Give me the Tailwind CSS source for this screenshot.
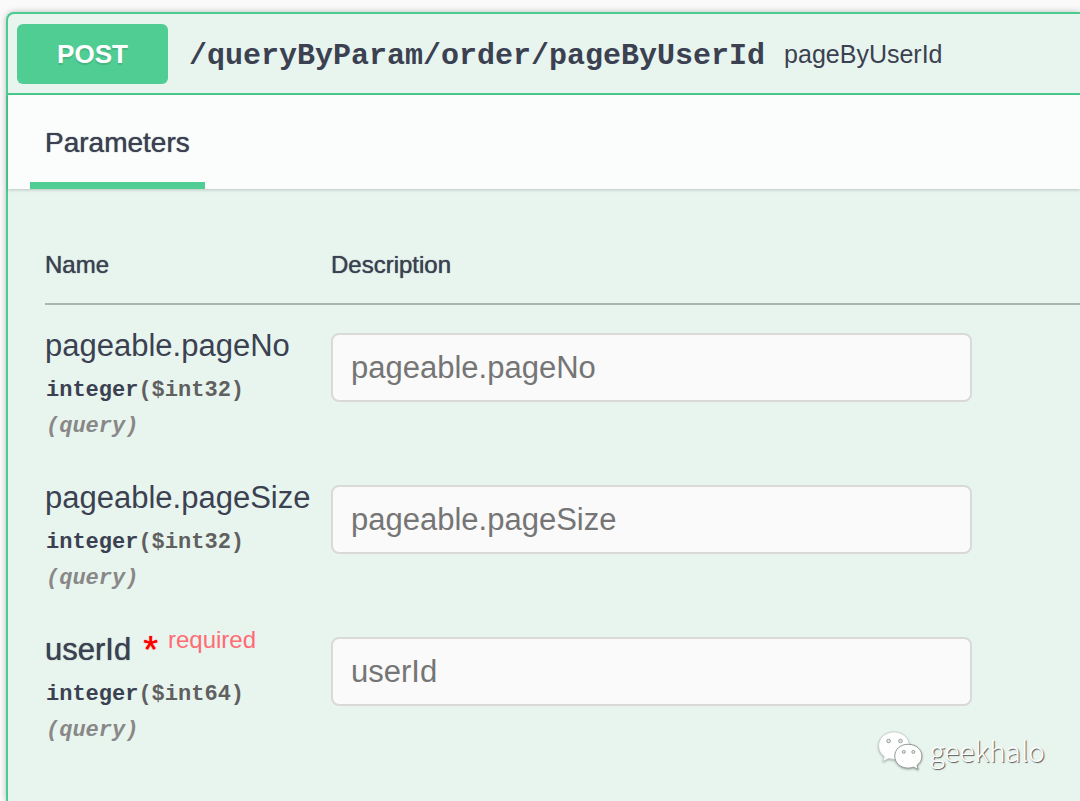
<!DOCTYPE html>
<html lang="en">
<head>
<meta charset="utf-8">
<meta name="viewport" content="width=device-width, initial-scale=1">
<title>POST /queryByParam/order/pageByUserId</title>
<script src="https://cdn.jsdelivr.net/npm/@tailwindcss/browser@4"></script>
</head>
<body class="relative flex min-h-screen flex-col bg-[#fafafa] pt-3 pl-[6px] font-['Liberation_Sans',Arial,sans-serif] text-[#3b4151]">
<main class="flex-1 rounded-tl-lg border-t-2 border-l-2 border-[#49cc90] bg-[#e8f5ee] shadow-[0_0_6px_rgba(0,0,0,0.25)]">
  <header class="flex items-center border-b-2 border-[#49cc90] pt-[10px] pb-[9px] pl-[9px]">
    <button type="button" class="h-[60px] w-[151px] rounded-md bg-[#50cd93] text-[26px] font-bold text-white [text-shadow:0_2px_1px_rgba(0,0,0,0.12)]">POST</button>
    <a href="#parameters" class="ml-[21px] pt-1 font-['Liberation_Mono','Courier_New',monospace] text-[30px] font-bold">/queryByParam/order/pageByUserId</a>
    <span class="ml-[19px] pt-[2px] text-[25px]">pageByUserId</span>
  </header>
  <section id="parameters">
    <div class="flex bg-[#fbfdfc] pl-[22px] shadow-[0_1px_3px_rgba(0,0,0,0.2)]">
      <h2 class="flex h-[94px] items-center border-b-[7px] border-[#50cd93] px-[15px] pt-2 text-[28px] [text-shadow:0_0_1px_#3b4151]">Parameters</h2>
    </div>
    <div class="pl-[37px]">
      <table class="w-full border-collapse text-left">
        <thead>
          <tr class="border-b-2 border-[#a9b6b1] text-2xl [text-shadow:0_0_1px_#3b4151]">
            <th scope="col" class="w-[286px] pt-[60px] pb-[22px] font-normal">Name</th>
            <th scope="col" class="pt-[60px] pb-[22px] font-normal">Description</th>
          </tr>
        </thead>
        <tbody class="align-top">
          <tr>
            <td class="pt-[19px] pb-[12px]">
              <label for="pageNo" class="block text-[31px] leading-[44px]">pageable.pageNo</label>
              <div class="mt-[5px] pl-px font-['Liberation_Mono','Courier_New',monospace] text-[22px] leading-[36px] font-bold">
                <div>integer<span class="text-[#606060]">($int32)</span></div>
                <div class="text-[#888] italic">(query)</div>
              </div>
            </td>
            <td class="pt-[28px]"><input id="pageNo" type="text" placeholder="pageable.pageNo" class="h-[69px] w-full max-w-[641px] rounded-lg border-2 border-[#d9d9d9] bg-[#fafafa] px-[18px] text-[31px] placeholder:text-[#757575]"></td>
          </tr>
          <tr>
            <td class="pt-[19px] pb-[12px]">
              <label for="pageSize" class="block text-[31px] leading-[44px]">pageable.pageSize</label>
              <div class="mt-[5px] pl-px font-['Liberation_Mono','Courier_New',monospace] text-[22px] leading-[36px] font-bold">
                <div>integer<span class="text-[#606060]">($int32)</span></div>
                <div class="text-[#888] italic">(query)</div>
              </div>
            </td>
            <td class="pt-[28px]"><input id="pageSize" type="text" placeholder="pageable.pageSize" class="h-[69px] w-full max-w-[641px] rounded-lg border-2 border-[#d9d9d9] bg-[#fafafa] px-[18px] text-[31px] placeholder:text-[#757575]"></td>
          </tr>
          <tr>
            <td class="pt-[19px] pb-[12px]">
              <label for="userId" class="flex text-[31px] leading-[44px]"><span class="[text-shadow:0_0_1px_#3b4151]">userId</span><span class="ml-3 text-[38px] text-[#f00] [text-shadow:0_0_1px_#f00]">*</span><span class="ml-[10px] text-2xl leading-[24px] text-[#ff6b75]">required</span></label>
              <div class="mt-[5px] pl-px font-['Liberation_Mono','Courier_New',monospace] text-[22px] leading-[36px] font-bold">
                <div>integer<span class="text-[#606060]">($int64)</span></div>
                <div class="text-[#888] italic">(query)</div>
              </div>
            </td>
            <td class="pt-[28px]"><input id="userId" type="text" placeholder="userId" required class="h-[69px] w-full max-w-[641px] rounded-lg border-2 border-[#d9d9d9] bg-[#fafafa] px-[18px] text-[31px] shadow-none placeholder:text-[#757575]"></td>
          </tr>
        </tbody>
      </table>
    </div>
  </section>
</main>
<div class="absolute right-[35px] bottom-[31px] flex items-center gap-[7px]">
  <svg class="h-[40px] w-[46px] drop-shadow-[0_1px_1px_rgba(0,0,0,0.3)]" viewBox="0 0 48 42" aria-hidden="true">
    <path d="M18 2C8.500 2 1.500 8.500 1.500 16.500c0 4.800 2.300 8.600 6 11.300L6 33l6-3.200c2 .6 4 .9 6.500.9C28 30.700 34 24 34 16.500S27 2 18 2Z" fill="#fdfefd" stroke="#c4ccc8" stroke-width=".8"/>
    <path d="M32.500 15C24 15 18.500 20.500 18.500 27.500S24.500 40 32.500 40c2 0 4-.4 5.700-1l5 2.400-1.400-4.300c3.400-2.400 5.200-5.500 5.200-9.600C47 20.500 41 15 32.500 15Z" fill="#fdfefd" stroke="#8b948f" stroke-width="1"/>
    <g fill="#dfe9e4" stroke="#8b948f" stroke-width=".9"><circle cx="12" cy="11.500" r="1.900"/><circle cx="24.500" cy="11.500" r="1.900"/><circle cx="28" cy="23" r="1.600"/><circle cx="38" cy="23" r="1.600"/></g>
  </svg>
  <span class="font-['Noto_Sans_CJK_SC',sans-serif] text-[28px] leading-[40px] font-light text-white [text-shadow:1px_1px_1px_#555]">geekhalo</span>
</div>
</body>
</html>
